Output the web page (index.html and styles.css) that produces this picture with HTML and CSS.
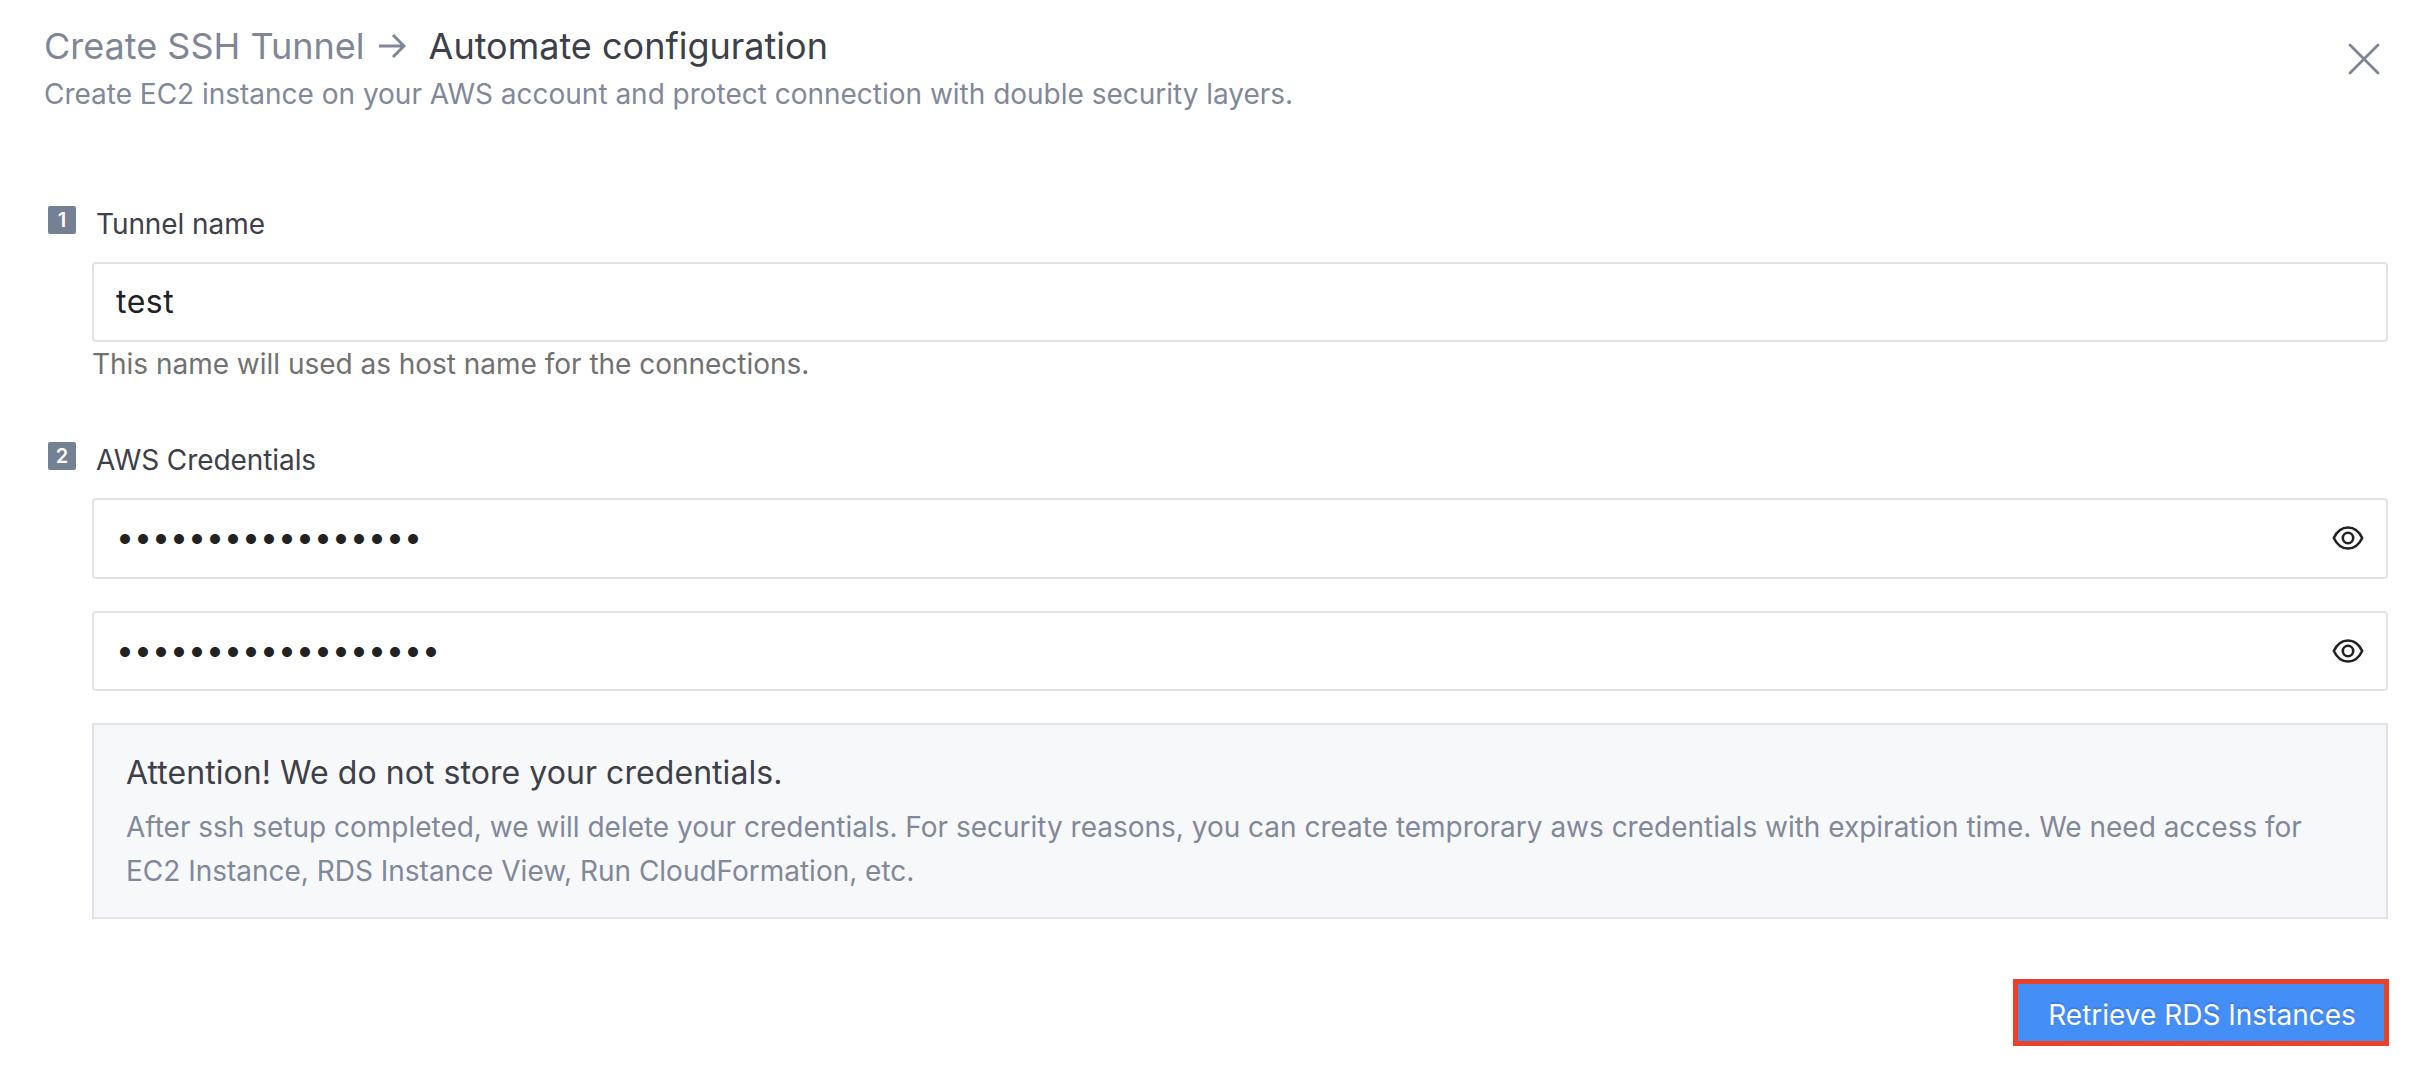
FILE: index.html
```html
<!DOCTYPE html>
<html lang="en">
<head>
<meta charset="utf-8">
<title>Create SSH Tunnel</title>
<link rel="stylesheet" href="styles.css">
</head>
<body>
<main class="dialog">
  <header class="header">
    <div class="heading">
      <h1 class="title"><span class="crumb">Create SSH Tunnel</span><svg class="arrow" viewBox="0 0 28 28"><path d="M1 14H26M15 3L26 14L15 25"/></svg><span class="current">Automate configuration</span></h1>
      <p class="subtitle">Create EC2 instance on your AWS account and protect connection with double security layers.</p>
    </div>
    <button class="close" aria-label="Close"><svg viewBox="0 0 32 32"><path d="M2 2L30 30M30 2L2 30"/></svg></button>
  </header>
  <section class="step step-name">
    <span class="badge">1</span>
    <div class="content">
      <label class="label" for="name">Tunnel name</label>
      <input class="field name-field" id="name" value="test">
      <p class="hint">This name will used as host name for the connections.</p>
    </div>
  </section>
  <section class="step step-credentials">
    <span class="badge">2</span>
    <div class="content">
      <div class="label">AWS Credentials</div>
      <div class="field secret first"><span class="dots">•••••••••••••••••</span><svg class="eye" viewBox="0 0 32 24"><path d="M1.8 12C8.5-2 23.5-2 30.2 12C23.5 26 8.5 26 1.8 12Z"/><circle cx="16" cy="12" r="5.2"/></svg></div>
      <div class="field secret second"><span class="dots">••••••••••••••••••</span><svg class="eye" viewBox="0 0 32 24"><path d="M1.8 12C8.5-2 23.5-2 30.2 12C23.5 26 8.5 26 1.8 12Z"/><circle cx="16" cy="12" r="5.2"/></svg></div>
      <div class="notice">
        <h2 class="notice-title">Attention! We do not store your credentials.</h2>
        <p class="notice-text">After ssh setup completed, we will delete your credentials. For security reasons, you can create temprorary aws credentials with expiration time. We need access for EC2 Instance, RDS Instance View, Run CloudFormation, etc.</p>
      </div>
    </div>
  </section>
  <footer class="footer"><button class="submit">Retrieve RDS Instances</button></footer>
</main>
</body>
</html>
```
FILE: styles.css
```css
* { box-sizing: border-box; }
body { margin: 0; background: #fff; font-family: Inter, sans-serif; color: #3d4049; }
h1, h2, p { margin: 0; font-weight: 400; }
button { font: inherit; }
.dialog { padding: 20px 42px 0 44px; }
.header { display: flex; justify-content: space-between; height: 174px; }
.title { display: flex; align-items: center; font-size: 36px; line-height: 52px; }
.crumb { color: #7f8797; }
.arrow { width: 28px; height: 28px; margin: 0 23px 0 13px; fill: none; stroke: #7f8797; stroke-width: 3; }
.subtitle { font-size: 28px; line-height: 44px; letter-spacing: -.015px; color: #81889a; }
.close { width: 32px; height: 32px; margin: 23px 8px 0 0; padding: 0; border: 0; background: none; }
.close svg { display: block; fill: none; stroke: #7d8496; stroke-width: 2.8; stroke-linecap: round; }
.step { display: flex; }
.badge { width: 28px; height: 28px; margin: 12px 16px 0 4px; border-radius: 2px; background: #748094; color: #fff; font-size: 20px; font-weight: 600; line-height: 28px; text-align: center; }
.content { flex: 1; }
.label { display: block; padding-left: 4px; height: 68px; font-size: 28px; line-height: 60px; letter-spacing: -.08px; }
.field { display: flex; width: 100%; height: 80px; padding: 0 22px; border: 2px solid #e2e3e9; border-radius: 4px; background: #fff; color: #222; font: 32px Inter, sans-serif; }
.name-field { padding-bottom: 2px; letter-spacing: .5px; }
.hint { font-size: 28px; line-height: 44px; letter-spacing: -.02px; color: #717171; }
.step-credentials { margin-top: 44px; }
.secret { align-items: center; justify-content: space-between; }
.first { height: 81px; padding-bottom: 1px; }
.dots { padding-bottom: 3px; }
.eye { width: 32px; height: 24px; fill: none; stroke: #222; stroke-width: 2.6; stroke-linejoin: round; }
.second { margin-top: 32px; }
.notice { margin-top: 32px; height: 196px; padding: 24px 32px; border: 2px solid #e2e3e9; background: #f7f8fa; }
.notice-title { font-size: 32px; line-height: 48px; letter-spacing: .06px; }
.notice-text { font-size: 28px; line-height: 44px; letter-spacing: -.01px; padding-top: 8px; color: #81889a; }
.footer { display: flex; justify-content: flex-end; margin: 60px -1px 0 0; }
.submit { width: 376px; height: 67px; padding: 5px 0 0 2px; border: 5px solid #e94228; background: #448ef7; box-shadow: 0 5px 0 -4px #448ef7, 0 8px 0 -3px #f3f3f3; color: #fff; font-size: 28px; text-shadow: 0 -2px 1px rgba(0, 0, 0, .12); }
```
